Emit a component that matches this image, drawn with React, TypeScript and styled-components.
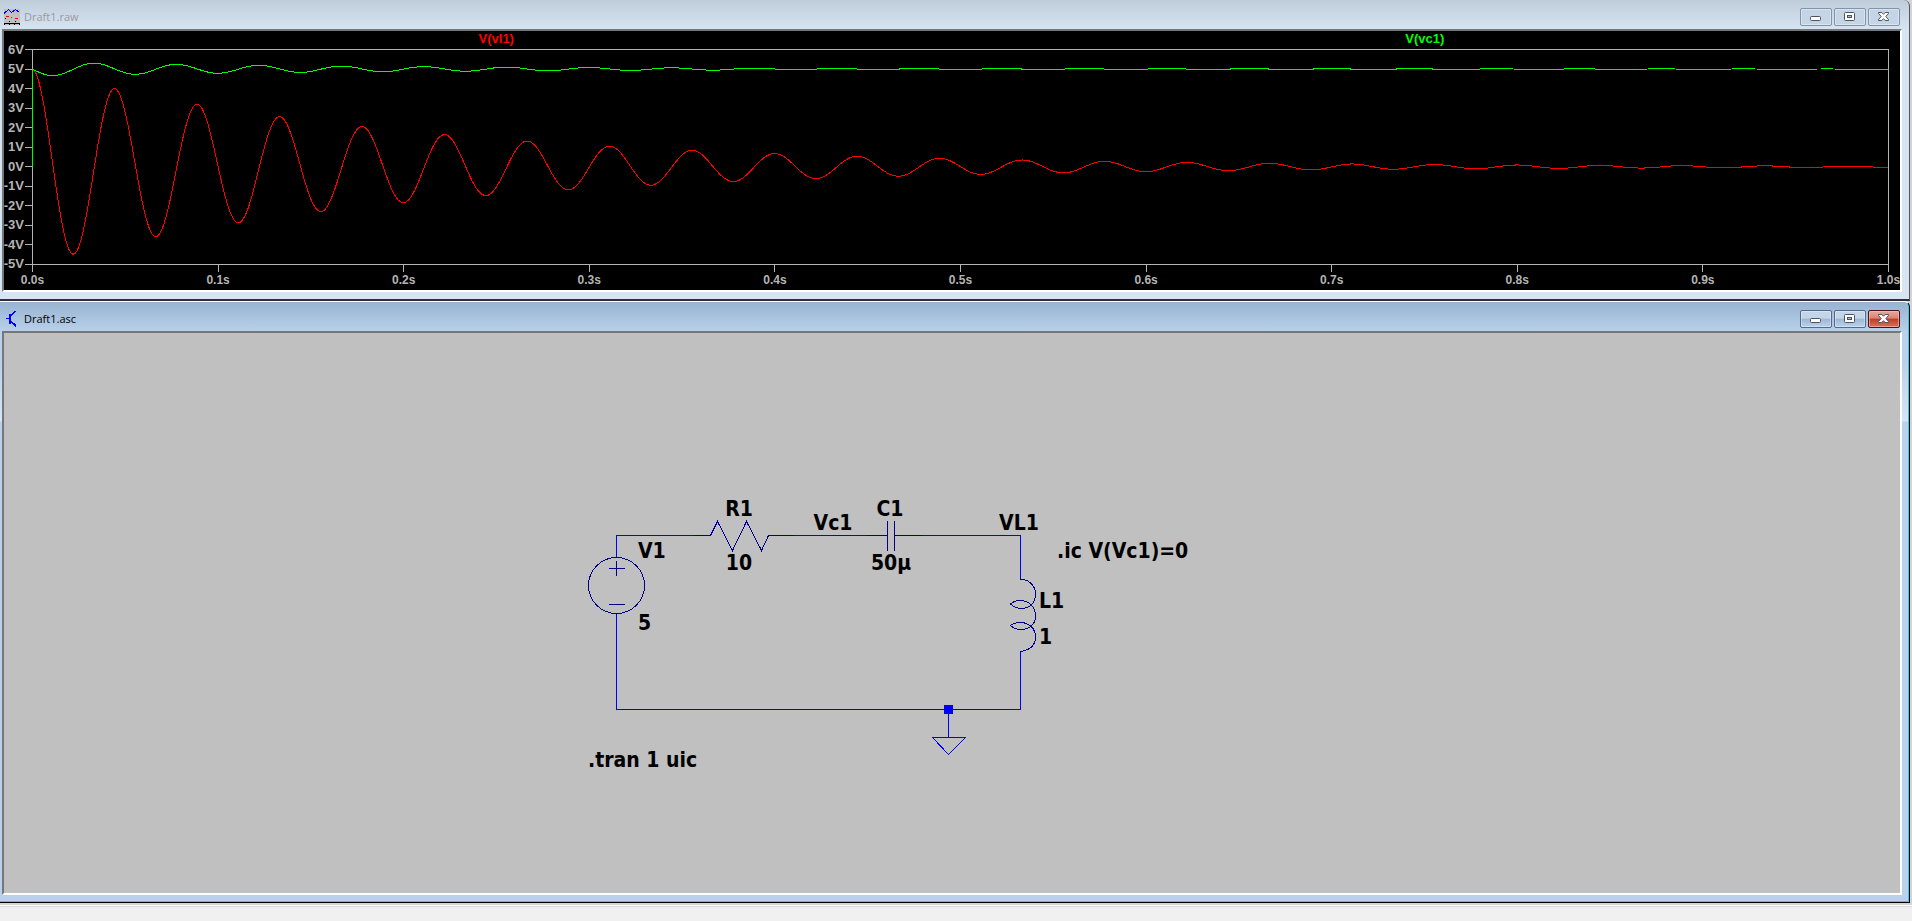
import React from 'react';
import styled, { createGlobalStyle } from 'styled-components';

const Global = createGlobalStyle`
  * { box-sizing: border-box; }
  body { margin: 0; background: #f0f0f0; overflow: hidden; }
`;

const Desktop = styled.main`
  height: 100vh;
  display: grid;
  grid-template-rows: 301px minmax(0, 1fr) 18px;
  background: #d4d4d4;
`;

const Frame = styled.section<{ $active?: boolean }>`
  display: grid;
  grid-template-rows: 29px minmax(0, 1fr);
  margin-right: 2px;
  padding: 0 7px 7px 2px;
  border-radius: 0 6px 0 0;
  border-right: 1px solid ${p => (p.$active ? '#000' : '#55555a')};
  border-bottom: ${p => (p.$active ? '1px solid #000' : '2px solid #2e2e33')};
  border-top: ${p => (p.$active ? '1px solid #fff' : '0')};
  box-shadow: ${p => (p.$active ? 'inset -1px -1px 0 #35c6ea' : 'none')};
  background: ${p =>
    p.$active
      ? 'linear-gradient(#98b3d1 0, #b9d1ea 30px 60px, #d7e5f5 119px, #b9d1ea 120px)'
      : 'linear-gradient(#bfcddb 0, #d7e4f2 30px)'};
`;

const TitleBar = styled.header`
  display: flex;
  align-items: center;
  gap: 4px;
  padding: 5px 2px 0 2px;
`;

const Title = styled.h1<{ $active?: boolean }>`
  flex: 1;
  margin: 0;
  font: 400 11px/16px "Open Sans", "Noto Sans", sans-serif;
  color: ${p => (p.$active ? '#000' : '#9a9a9c')};
`;

const Controls = styled.div`
  display: flex;
  gap: 2px;
`;

const Control = styled.button<{ $tone: 'idle' | 'active' | 'close' }>`
  width: 32px;
  height: 18px;
  padding: 0;
  display: grid;
  place-items: center;
  border-radius: 2px;
  border: 1px solid ${p => ({ idle: '#8293ad', active: '#566a88', close: '#4c1218' })[p.$tone]};
  box-shadow: inset 0 0 0 1px ${p => (p.$tone === 'close' ? 'rgba(255,190,180,.6)' : 'rgba(255,255,255,.35)')};
  background: ${p =>
    ({
      idle: '#c6d5e5',
      active: 'linear-gradient(#c3d5e9 0 45%, #9db7d4 50%, #b9d2ec)',
      close: 'linear-gradient(#e8a99c 0, #d98473 45%, #bf3c25 50%, #d7735c)',
    })[p.$tone]};
`;

const Pane = styled.div<{ $fill: string }>`
  min-width: 0;
  min-height: 0;
  overflow: hidden;
  border: solid;
  border-width: 2px;
  border-color: #75787b #fff #fff #75787b;
  background: ${p => p.$fill};
`;

const Plot = styled.div`
  height: 100%;
  display: grid;
  grid-template-columns: 28px minmax(0, 1fr) 11px;
  grid-template-rows: 18px minmax(0, 1fr) 25px;
  font: 700 13px/16px "Liberation Sans", Arial, sans-serif;
  color: #b4b4b4;
`;

const Legend = styled.div`
  grid-column: 2;
  display: grid;
  grid-template-columns: 1fr 1fr;
  text-align: center;
`;

const TraceName = styled.span<{ $color: string }>`
  color: ${p => p.$color};
`;

const VoltAxis = styled.div`
  grid-column: 1;
  grid-row: 2;
  display: flex;
  flex-direction: column;
  justify-content: space-between;
`;

const VoltMark = styled.div`
  height: 1px;
  display: flex;
  align-items: center;
  justify-content: flex-end;
  gap: 1px;
  white-space: nowrap;
  &::after { content: ""; flex: none; width: 7px; height: 1px; background: #b4b4b4; }
`;

const TimeAxis = styled.div`
  grid-column: 2;
  grid-row: 3;
  display: flex;
  justify-content: space-between;
  font-size: 12px;
`;

const TimeMark = styled.div`
  width: 1px;
  display: flex;
  flex-direction: column;
  align-items: center;
  white-space: nowrap;
  &::before { content: ""; flex: none; width: 1px; height: 7px; background: #b4b4b4; }
`;

const Graph = styled.svg`
  grid-column: 2;
  grid-row: 2;
  width: 100%;
  height: 100%;
  fill: none;
  shape-rendering: crispEdges;
  path { vector-effect: non-scaling-stroke; }
`;

const Sheet = styled.svg`
  display: block;
  width: 100%;
  height: 100%;
  fill: none;
  shape-rendering: crispEdges;
  text {
    font: 700 21px "DejaVu Sans Condensed", "DejaVu Sans", sans-serif;
    fill: #000;
  }
`;

const StatusBar = styled.footer`
  border-top: 2px solid #d4d4d4;
  background: #f0f0f0;
  box-shadow: inset 0 1px 0 #fff, inset 0 2px 0 #d8d8d8;
`;

const W = 1856;
const H = 215;
const DECAY = 5;
const OMEGA = Math.sqrt(1 / (1 * 50e-6) - DECAY * DECAY);

function trace(volts: (t: number) => number) {
  const points: string[] = [];
  for (let i = 0; i <= W; i += 2) {
    points.push(`${i} ${(((6 - volts(i / W)) * H) / 11).toFixed(2)}`);
  }
  return 'M' + points.join('L');
}

const inductorTrace = trace(t => 5 * Math.exp(-DECAY * t) * Math.cos(OMEGA * t));
const capacitorTrace = trace(t => 5 - (50 / OMEGA) * Math.exp(-DECAY * t) * Math.sin(OMEGA * t));

const volts = [6, 5, 4, 3, 2, 1, 0, -1, -2, -3, -4, -5];
const times = Array.from({ length: 11 }, (_, i) => (i / 10).toFixed(1) + 's');

function WindowControls({ active }: { active?: boolean }) {
  const tone = active ? 'active' : 'idle';
  return (
    <Controls>
      <Control $tone={tone} aria-label="Minimize">
        <svg width="12" height="12" fill="#fff" stroke="#4c5362">
          <rect x="0.5" y="5.5" width="10" height="4" rx="1" />
        </svg>
      </Control>
      <Control $tone={tone} aria-label="Maximize">
        <svg width="12" height="10" fill="#fff" stroke="#4c5362">
          <rect x="0.5" y="0.5" width="10" height="8" rx="1" />
          <rect x="3.5" y="3.5" width="4" height="2" fill="#a9bdd3" />
        </svg>
      </Control>
      <Control $tone={active ? 'close' : 'idle'} aria-label="Close">
        <svg width="12" height="10" fill="#fff" stroke="#4c5362">
          <path d="M.5.5H3.800L5.500 2.300 7.200.5H10.500V1.500L7.800 4.500 10.500 7.500V8.500H7.200L5.500 6.700 3.800 8.500H.5V7.500L3.200 4.500.5 1.500Z" />
        </svg>
      </Control>
    </Controls>
  );
}

function WaveIcon() {
  return (
    <svg width="16" height="16" fill="none" shapeRendering="crispEdges">
      <rect width="16" height="16" fill="#c0c0c0" />
      <path d="M0 4.500 4.500 .5 7.500 3.500 11.500 .5 15.500 3.500" stroke="#00f" />
      <path d="M2 7.500h3M7 8.500h1M11 9.500h3" stroke="#f00" />
      <path d="M0 14.500h16M1 9.500h1M5 12.500h1M11 12.500h1M0 15v1M5 15v1M10 15v1M15 15v1" stroke="#000" />
    </svg>
  );
}

function TransistorIcon() {
  return (
    <svg width="16" height="16" fill="none" stroke="#00f" shapeRendering="crispEdges">
      <path d="M2 7.500h4M6 5.500 11.500 0M6 9.500 12 15.500M9 13.500h3M10.500 12v3" />
      <path d="M6 3v10" strokeWidth="2" />
    </svg>
  );
}

function Schematic() {
  return (
    <Sheet role="img" aria-label="Series RLC circuit">
      <g stroke="#0000ff">
        <path d="M612.500 224V202.500H690M790 202.500H862M918 202.500H1016.500V246M612.500 281V376.500H1016.500V318M944.500 376V404" />
        <path d="M928.500 404.500H961.500L944.500 421.500Z" />
        <rect x="940.500" y="372.500" width="8" height="8" fill="#00f" />
      </g>
      <g stroke="#00008b">
        <circle cx="612.500" cy="252.500" r="28" />
        <path d="M612.500 228V243M605 235.500H621M605 271.500H621" />
        <path d="M690 202.500H706.500L713.500 188.500 728.500 217.500 742.500 188.500 757.500 217.500 764.500 202.500H790" />
        <path d="M862 202.500H883.500M883.500 188V218M890.500 188V218M890.500 202.500H918" />
        <path d="M1016.500 246.500C1024 246 1031.500 252 1031.500 261C1031.500 268 1028 275 1017 275.500C1012 275 1009 274 1006.500 271C1010 268 1013 267 1017 267.500C1026 268 1031.500 275 1031.500 283C1031.500 291 1026 296.500 1017 296.500C1012 296.500 1009 295 1006.500 292.500C1010 290 1013 289 1017 289.500C1026 290 1031.500 296 1031.500 304C1031.500 311 1027 317 1016.500 318.500" />
      </g>
      <text x="634" y="225">V1</text>
      <text x="634" y="297">5</text>
      <text x="735" y="183" textAnchor="middle">R1</text>
      <text x="735" y="237" textAnchor="middle">10</text>
      <text x="829" y="197" textAnchor="middle">Vc1</text>
      <text x="886" y="183" textAnchor="middle">C1</text>
      <text x="887" y="237" textAnchor="middle">50µ</text>
      <text x="1015" y="197" textAnchor="middle">VL1</text>
      <text x="1053" y="225">.ic V(Vc1)=0</text>
      <text x="1035" y="275">L1</text>
      <text x="1035" y="311">1</text>
      <text x="584" y="434">.tran 1 uic</text>
    </Sheet>
  );
}

export default function App() {
  return (
    <>
      <Global />
      <Desktop>
        <Frame>
          <TitleBar>
            <WaveIcon />
            <Title>Draft1.raw</Title>
            <WindowControls />
          </TitleBar>
          <Pane $fill="#000">
            <Plot>
              <Legend>
                <TraceName $color="#f00">V(vl1)</TraceName>
                <TraceName $color="#0f0">V(vc1)</TraceName>
              </Legend>
              <VoltAxis>
                {volts.map(v => <VoltMark key={v}>{v}V</VoltMark>)}
              </VoltAxis>
              <Graph viewBox={`-0.5 -0.5 ${W + 1} ${H + 1}`} preserveAspectRatio="none">
                <path d={`M0 0H${W}V${H}H0Z`} stroke="#b4b4b4" />
                <path d={inductorTrace} stroke="#f00" />
                <path d={`M0 ${(H * 6) / 11}V${H / 11}`} stroke="#0f0" />
                <path d={capacitorTrace} stroke="#0f0" />
              </Graph>
              <TimeAxis>
                {times.map(t => <TimeMark key={t}>{t}</TimeMark>)}
              </TimeAxis>
            </Plot>
          </Pane>
        </Frame>
        <Frame $active>
          <TitleBar>
            <TransistorIcon />
            <Title $active>Draft1.asc</Title>
            <WindowControls active />
          </TitleBar>
          <Pane $fill="#c0c0c0">
            <Schematic />
          </Pane>
        </Frame>
        <StatusBar />
      </Desktop>
    </>
  );
}
